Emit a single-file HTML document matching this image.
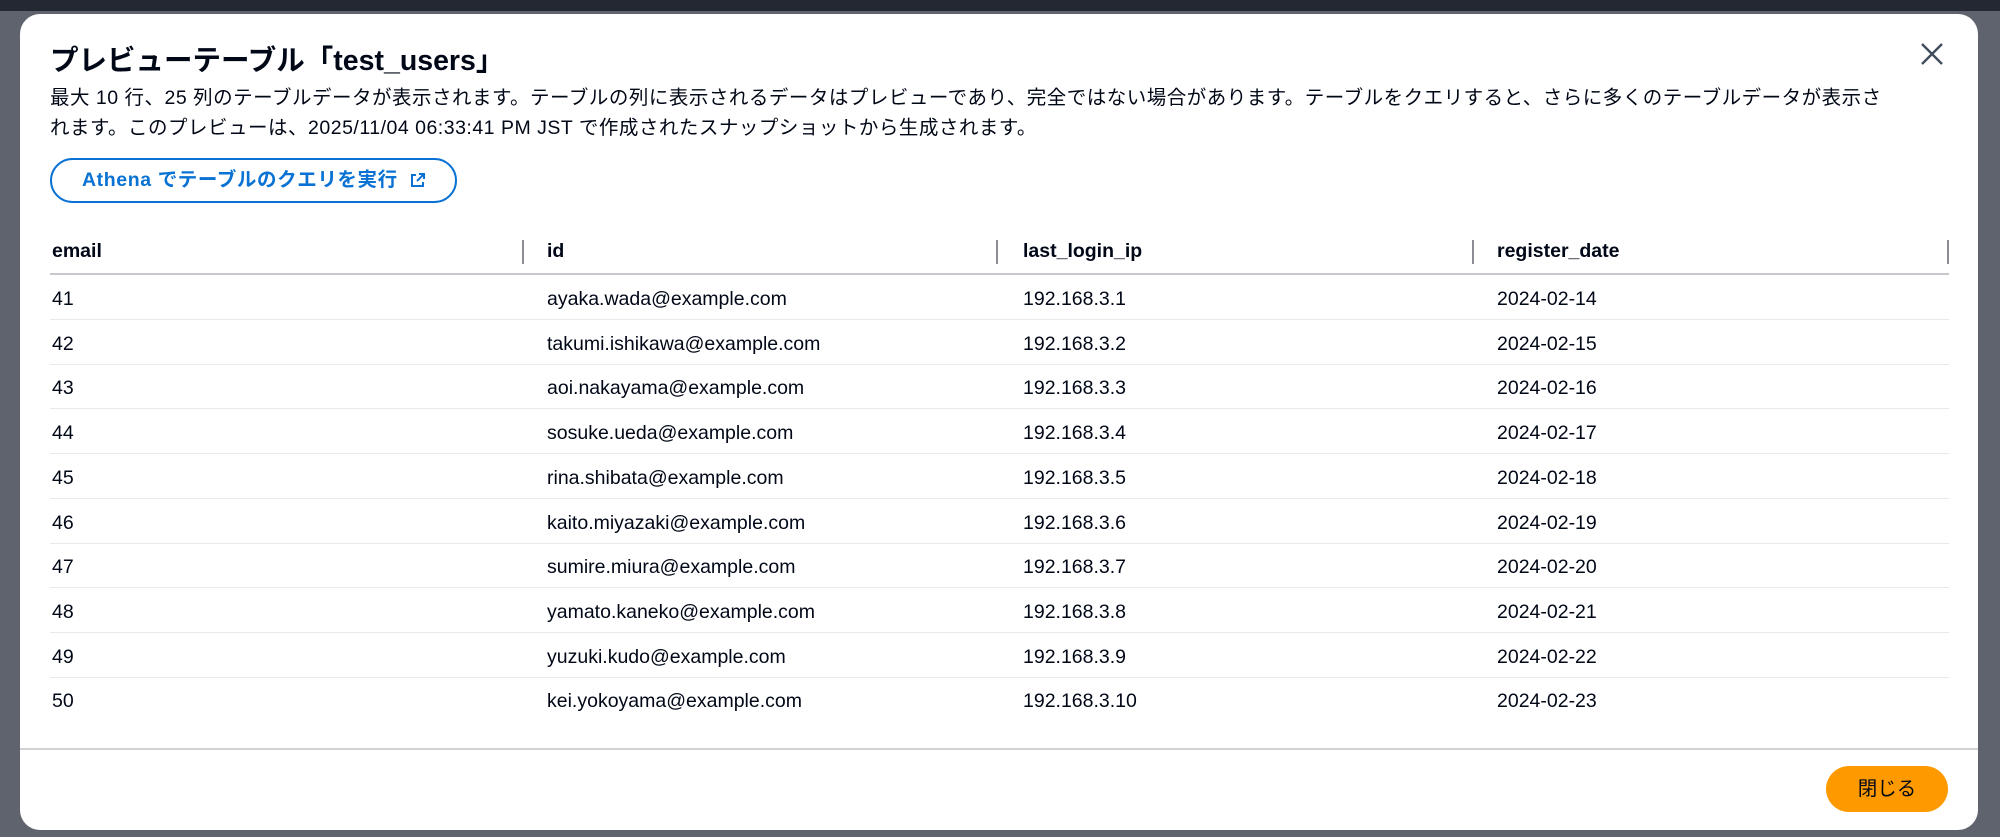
<!DOCTYPE html>
<html><head><meta charset="utf-8">
<style>
*{margin:0;padding:0;box-sizing:border-box}
body{width:2000px;height:837px;overflow:hidden;background:#5f636e;font-family:"Liberation Sans","Noto Sans CJK JP",sans-serif;color:#000716;position:relative}
.top{position:absolute;left:0;top:0;width:2000px;height:11px;background:#232833}
.modal{position:absolute;left:20px;top:14px;width:1958px;height:816px;background:#fff;border-radius:20px;overflow:hidden}
.title{position:absolute;left:30px;top:24px;font-size:28.5px;font-weight:bold;color:#000716;white-space:nowrap}
.desc{position:absolute;left:30px;top:69px;width:1900px;font-size:19.5px;line-height:30px;color:#000716;white-space:nowrap;letter-spacing:0.5px}
.x{position:absolute;left:1900px;top:28px}
.btn{position:absolute;left:30px;top:144px;width:407px;height:45px;border:2px solid #0972d3;border-radius:23px;color:#0972d3;font-size:19.5px;font-weight:bold;line-height:41px;padding-left:30px;white-space:nowrap;letter-spacing:0.6px}
.th{position:absolute;top:226px;font-size:19.5px;font-weight:bold;color:#000716}
.sep{position:absolute;top:226px;width:2px;height:24px;background:#8c8c94}
.hl{position:absolute;left:30px;top:259px;width:1899px;height:2px;background:#c6c6cd}
.row{position:absolute;left:30px;width:1899px;height:1px;background:#e9e9ed}
.td{position:absolute;font-size:19.5px;color:#000716;white-space:nowrap}
.fl{position:absolute;left:0;top:734px;width:1958px;height:2px;background:#d1d1d6}
.close{position:absolute;left:1806px;top:752px;width:122px;height:46px;background:#ff9900;border-radius:23px;font-size:19.5px;text-align:center;line-height:46px;color:#000716}
</style></head><body>
<div class="top"></div>
<div class="modal">
<div class="title">プレビューテーブル「test_users」</div>
<div class="desc">最大 10 行、25 列のテーブルデータが表示されます。テーブルの列に表示されるデータはプレビューであり、完全ではない場合があります。テーブルをクエリすると、さらに多くのテーブルデータが表示さ<br>れます。このプレビューは、2025/11/04 06:33:41 PM JST で作成されたスナップショットから生成されます。</div>
<svg class="x" width="24" height="24" viewBox="0 0 24 24"><path d="M2 2L22 22M22 2L2 22" stroke="#414d5c" stroke-width="2.4" fill="none"/></svg>
<div class="btn">Athena でテーブルのクエリを実行 <svg width="16" height="16" viewBox="0 0 16 16" style="vertical-align:-2px;margin-left:6px"><path d="M9 2h5v5M14 2L7 9M6 3H2v11h11v-4" stroke="#0972d3" stroke-width="2" fill="none"/></svg></div>
<div class="th" style="left:32px">email</div>
<div class="th" style="left:527px">id</div>
<div class="th" style="left:1003px">last_login_ip</div>
<div class="th" style="left:1477px">register_date</div>
<div class="sep" style="left:502px"></div>
<div class="sep" style="left:976px"></div>
<div class="sep" style="left:1452px"></div>
<div class="sep" style="left:1927px"></div>
<div class="hl"></div>
</div>
<script>
var m=document.querySelector('.modal');
var d=[["41","ayaka.wada","1","14"],["42","takumi.ishikawa","2","15"],["43","aoi.nakayama","3","16"],["44","sosuke.ueda","4","17"],["45","rina.shibata","5","18"],["46","kaito.miyazaki","6","19"],["47","sumire.miura","7","20"],["48","yamato.kaneko","8","21"],["49","yuzuki.kudo","9","22"],["50","kei.yokoyama","10","23"]];
var h='';
d.forEach(function(r,i){var c=283+i*44.7;var t=c-9;
h+='<div class="td" style="left:32px;top:'+t+'px">'+r[0]+'</div><div class="td" style="left:527px;top:'+t+'px">'+r[1]+'@example.com</div><div class="td" style="left:1003px;top:'+t+'px">192.168.3.'+r[2]+'</div><div class="td" style="left:1477px;top:'+t+'px">2024-02-'+r[3]+'</div>';
if(i<9)h+='<div class="row" style="top:'+(c+22)+'px"></div>';});
h+='<div class="fl"></div><div class="close">閉じる</div>';
m.insertAdjacentHTML('beforeend',h);
</script>
</body></html>
